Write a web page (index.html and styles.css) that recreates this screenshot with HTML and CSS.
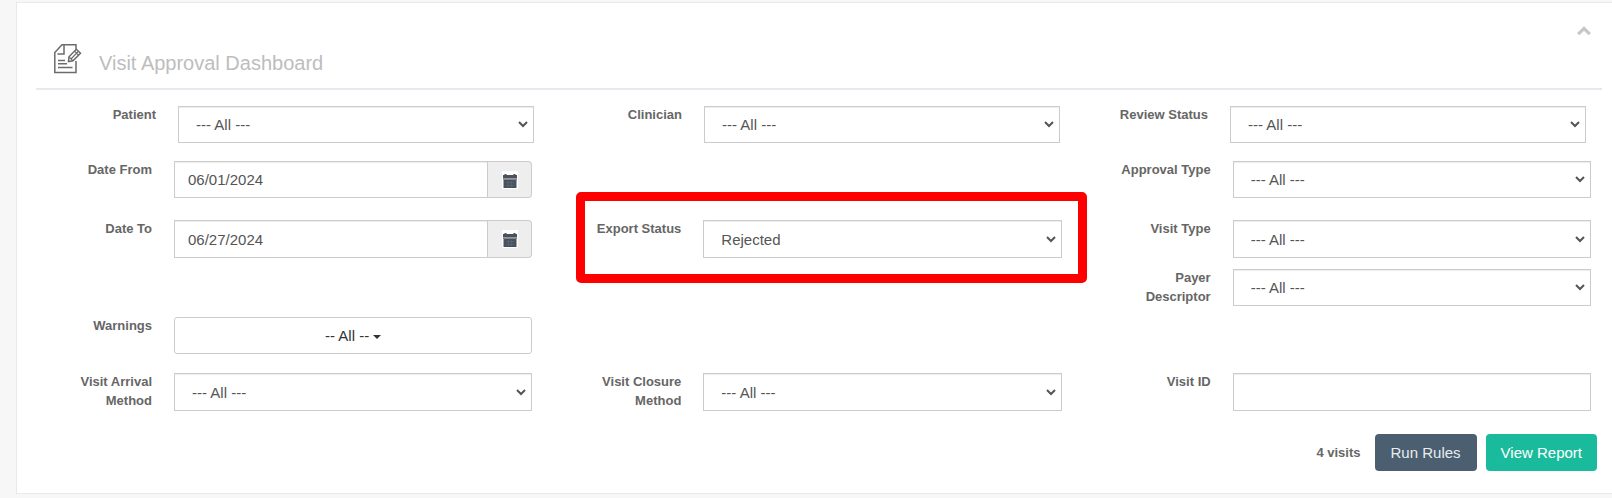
FILE: index.html
```html
<!DOCTYPE html>
<html lang="en">
<head>
  <meta charset="utf-8">
  <title>Visit Approval Dashboard</title>
  <link rel="stylesheet" href="styles.css">
</head>
<body>
<div class="panel">
  <div class="panel-title">
    <svg class="title-icon" width="30" height="32" viewBox="0 0 30 32" fill="none" stroke="#6b6b6b" stroke-width="1.5">
      <path d="M23 6V1.8H9L1.8 9.500V29.500H23V18"/>
      <path d="M11 2V11H4.500"/>
      <path d="M5 17.500H12M5 20.800H14M5 24.500H19.500"/>
      <path d="M15.500 18.500L16 13.800L23.300 6.200L27.500 10.200L20 17.800Z"/>
      <path d="M18 16L25.500 8.200M16 13.800L20 17.800M21.500 8.200L25.500 12.200" stroke-width="1.200"/>
    </svg>
    <h2>Visit Approval Dashboard</h2>
    <button type="button" class="collapse-link" aria-label="Collapse">
      <svg width="14" height="10" viewBox="0 0 14 10" fill="none" stroke="#c5c7cb" stroke-width="3.200"><path d="M1.200 8.200L7 2.500L12.800 8.200"/></svg>
    </button>
  </div>

  <form class="filters">
    <div class="filter-row filter-row-top">
      <div class="field">
        <label for="patient">Patient</label>
        <select id="patient" class="form-control"><option>--- All ---</option></select>
      </div>
      <div class="field">
        <label for="clinician">Clinician</label>
        <select id="clinician" class="form-control"><option>--- All ---</option></select>
      </div>
      <div class="field">
        <label for="review-status">Review Status</label>
        <select id="review-status" class="form-control"><option>--- All ---</option></select>
      </div>
    </div>

    <div class="filter-row loose">
      <div class="field">
        <label for="date-from">Date From</label>
        <div class="input-group">
          <input type="text" id="date-from" class="form-control" value="06/01/2024">
          <button type="button" class="addon" aria-label="Pick date from">
            <svg width="16" height="18" viewBox="0 0 16 18"><path fill="#fff" d="M0 0H16V18H0z"/><path fill="#46525f" d="M1 4H2.500V3H4.500V4H11.500V3H13.500V4H15V7.500H1zM1.500 9H14.500V17H1.500z"/><path fill="#8d8489" d="M1 7.500H15V9H1z"/><path stroke="#566270" d="M4 11.500H12M4 14.500H12M6.500 10V16M9.500 10V16"/></svg>
          </button>
        </div>
      </div>
      <div class="field last">
        <label for="approval-type">Approval Type</label>
        <select id="approval-type" class="form-control"><option>--- All ---</option></select>
      </div>
    </div>

    <div class="filter-row tall tight">
      <div class="field">
        <label for="date-to">Date To</label>
        <div class="input-group">
          <input type="text" id="date-to" class="form-control" value="06/27/2024">
          <button type="button" class="addon" aria-label="Pick date to">
            <svg width="16" height="18" viewBox="0 0 16 18"><path fill="#fff" d="M0 0H16V18H0z"/><path fill="#46525f" d="M1 4H2.500V3H4.500V4H11.500V3H13.500V4H15V7.500H1zM1.500 9H14.500V17H1.500z"/><path fill="#8d8489" d="M1 7.500H15V9H1z"/><path stroke="#566270" d="M4 11.500H12M4 14.500H12M6.500 10V16M9.500 10V16"/></svg>
          </button>
        </div>
      </div>
      <div class="field highlight">
        <label for="export-status">Export Status</label>
        <select id="export-status" class="form-control"><option>Rejected</option></select>
      </div>
      <div class="field">
        <label for="visit-type">Visit Type</label>
        <select id="visit-type" class="form-control"><option>--- All ---</option></select>
      </div>
    </div>

    <div class="filter-row tight">
      <div class="field last">
        <label for="payer">Payer Descriptor</label>
        <select id="payer" class="form-control"><option>--- All ---</option></select>
      </div>
    </div>

    <div class="filter-row">
      <div class="field">
        <label for="warnings">Warnings</label>
        <button type="button" id="warnings" class="form-control dropdown">-- All -- <span class="caret"></span></button>
      </div>
    </div>

    <div class="filter-row tall">
      <div class="field">
        <label for="arrival">Visit Arrival Method</label>
        <select id="arrival" class="form-control"><option>--- All ---</option></select>
      </div>
      <div class="field">
        <label for="closure">Visit Closure Method</label>
        <select id="closure" class="form-control"><option>--- All ---</option></select>
      </div>
      <div class="field">
        <label for="visit-id">Visit ID</label>
        <input type="text" id="visit-id" class="form-control">
      </div>
    </div>

    <div class="actions">
      <span class="count">4 visits</span>
      <button type="button" class="btn btn-dark">Run Rules</button>
      <button type="button" class="btn btn-success">View Report</button>
    </div>
  </form>
</div>
</body>
</html>
```
FILE: styles.css
```css
* {
  box-sizing: border-box;
}

body {
  margin: 0;
  padding: 2px 0 4px 16px;
  background: #f7f7f7;
  color: #666;
  font-family: "Liberation Sans", Arial, sans-serif;
  font-size: 13px;
  line-height: 19px;
}

button,
input,
select {
  font-family: inherit;
}

.panel {
  padding: 0 10px 22px 19px;
  background: #fff;
  border: 1px solid #e6e9ed;
  border-right: none;
}

.panel-title {
  display: flex;
  align-items: flex-end;
  height: 87px;
  padding: 0 11px 13px 17px;
  border-bottom: 2px solid #e6e9ed;
}
.panel-title h2 {
  flex: 1;
  margin: 0 0 0 16px;
  color: #bdbdbd;
  font-size: 20px;
  font-weight: 400;
  line-height: 24px;
}

.collapse-link {
  display: flex;
  align-self: flex-start;
  margin-top: 23px;
  padding: 0;
  border: none;
  background: none;
  cursor: pointer;
}

.filters {
  padding: 15px 11px 0 0;
}

.filter-row {
  display: grid;
  grid-template-columns: repeat(3, 1fr);
  column-gap: 33px;
  margin-bottom: 18px;
}
.filter-row.tight {
  margin-bottom: 10px;
}
.filter-row.loose {
  margin-bottom: 21px;
}
.filter-row-top {
  column-gap: 28px;
  margin-right: 5px;
  margin-bottom: 17px;
}

.field {
  display: grid;
  grid-template-columns: 101px 1fr;
  column-gap: 22px;
  align-items: start;
  padding-left: 15px;
}
.filter-row-top .field {
  padding-left: 19px;
}
.field.last {
  grid-column: 3;
}
.field label {
  font-weight: 700;
  text-align: right;
}

.form-control {
  width: 100%;
  min-width: 0;
  height: 37px;
  margin: 1px 0 0;
  padding: 6px 13px;
  border: 1px solid #ccc;
  border-radius: 0;
  background-color: #fff;
  box-shadow: inset 0 1px 1px rgba(0, 0, 0, .075);
  color: #555;
  font-size: 15px;
}
.tall .form-control,
.tall .addon {
  height: 38px;
}

select.form-control {
  -webkit-appearance: none;
  appearance: none;
  padding: 6px 17px;
  background-image: url("data:image/svg+xml,%3Csvg xmlns='http://www.w3.org/2000/svg' width='10' height='7' fill='none' stroke='%23555' stroke-width='2'%3E%3Cpath d='M1 1l4 4 4-4'/%3E%3C/svg%3E");
  background-position: right 5px center;
  background-repeat: no-repeat;
}

.input-group {
  display: flex;
}
.input-group .form-control {
  flex: 1;
}

.addon {
  display: flex;
  align-items: center;
  justify-content: center;
  width: 44px;
  height: 37px;
  margin-top: 1px;
  padding: 0;
  border: 1px solid #ccc;
  border-left: none;
  border-radius: 0 4px 4px 0;
  background: #eee;
}

.dropdown {
  border-radius: 3px;
  box-shadow: none;
  color: #333;
}
.caret {
  display: inline-block;
  vertical-align: middle;
  border-top: 4px solid #333;
  border-left: 4px solid transparent;
  border-right: 4px solid transparent;
}

.highlight {
  position: relative;
}
.highlight:after {
  content: '';
  position: absolute;
  top: -27px;
  right: -25px;
  bottom: -25px;
  left: 11px;
  border: 9px solid #f00;
  border-radius: 5px;
  pointer-events: none;
}

.actions {
  display: flex;
  align-items: center;
  justify-content: flex-end;
  gap: 9px;
  margin: 23px -6px 0 0;
}
.count {
  margin-right: 5px;
  font-weight: 700;
}

.btn {
  height: 37px;
  padding: 6px 15px;
  border: none;
  border-radius: 4px;
  color: #fff;
  font-size: 15px;
  cursor: pointer;
}
.btn-dark {
  padding: 6px 16px;
  background: #4b5f71;
  color: #e9edef;
}
.btn-success {
  background: #1abb9c;
}
```
